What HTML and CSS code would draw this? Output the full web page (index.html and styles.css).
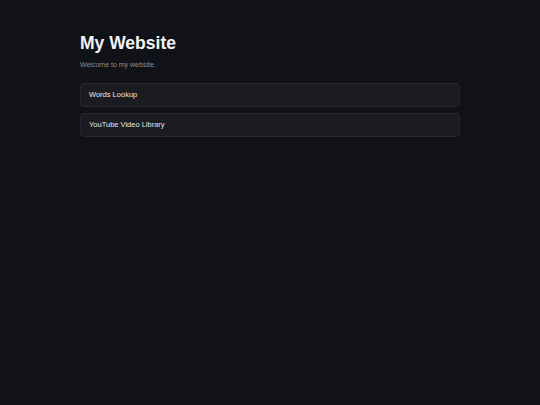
FILE: index.html
```html
<!DOCTYPE html>
<html lang="en">
<head>
<meta charset="utf-8">
<title>My Website</title>
<link rel="stylesheet" href="styles.css">
</head>
<body>
<main class="container">
  <h1 class="title">My Website</h1>
  <p class="subtitle">Welcome to my website.</p>
  <nav class="links">
    <a class="card" href="#">Words Lookup</a>
    <a class="card" href="#">YouTube Video Library</a>
  </nav>
</main>
</body>
</html>
```

FILE: styles.css
```css
html, body {
  margin: 0;
  padding: 0;
  background: #111217;
  color: #e8e9ec;
  font-family: "Liberation Sans", Arial, sans-serif;
}
.container {
  width: 380px;
  margin: 0 auto;
  padding-top: 33px;
}
.title {
  margin: 0;
  font-size: 17.5px;
  line-height: 20px;
  font-weight: 700;
  color: #f2f3f5;
}
.subtitle {
  margin: 7px 0 0;
  font-size: 7px;
  line-height: 9px;
  color: #8b8e96;
}
.links {
  display: flex;
  flex-direction: column;
  gap: 6px;
  margin-top: 14px;
}
.card {
  display: block;
  box-sizing: border-box;
  height: 24px;
  padding: 0 8px;
  line-height: 22px;
  font-size: 7.5px;
  color: #e4e5e8;
  text-decoration: none;
  background: #1a1c22;
  border: 1px solid #262830;
  border-radius: 4px;
}
```
